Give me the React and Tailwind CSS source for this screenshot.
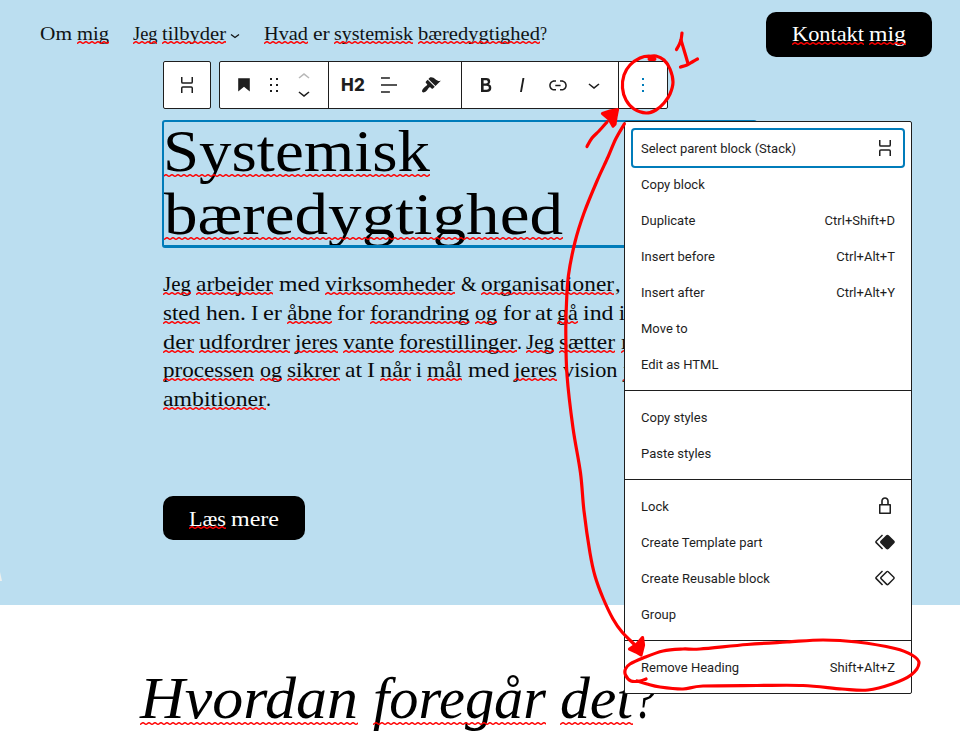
import { useLayoutEffect, useRef, useState } from 'react';

// Each word: [text, left edge, right edge, flagged by the spell checker]
const NAV_1 = [['Om', 40, 72], ['mig', 77, 109, 1]];
const NAV_2 = [['Jeg', 132.5, 157, 1], ['tilbyder', 162, 226, 1]];
const NAV_3 = [['Hvad', 264, 308, 1], ['er', 312.7, 329.5], ['systemisk', 334, 413, 1], ['bæredygtighed', 418, 540, 1], ['?', 540, 547]];
const CONTACT = [['Kontakt', 792, 864, 1], ['mig', 869, 906, 1]];
const READ_MORE = [['Læs', 189, 226, 1], ['mere', 231, 279]];
const TITLE = [[['Systemisk', 163, 430, 1]], [['bæredygtighed', 164, 563, 1]]];
const BODY = [
  [['Jeg', 163, 191, 1], ['arbejder', 196, 273, 1], ['med', 279, 320], ['virksomheder', 325, 455, 1], ['&', 460.5, 476], ['organisationer', 481, 614, 1], [',', 614.5, 620]],
  [['sted', 163, 200, 1], ['hen.', 206, 246], ['I', 251, 258.5], ['er', 263, 282], ['åbne', 287, 332, 1], ['for', 337, 364.5], ['forandring', 370, 469.5, 1], ['og', 475, 497, 1], ['for', 502.5, 530], ['at', 535, 552.5], ['gå', 557, 578, 1], ['ind', 583, 613.5], ['i', 619, 625]],
  [['der', 163, 194, 1], ['udfordrer', 199, 290, 1], ['jeres', 295, 338, 1], ['vante', 343, 394, 1], ['forestillinger', 399, 517, 1], ['.', 517, 522], ['Jeg', 526, 554, 1], ['sætter', 559, 615, 1], ['r', 620.5, 629, 1]],
  [['processen', 163, 254, 1], ['og', 260, 282, 1], ['sikrer', 287, 340, 1], ['at', 345, 362], ['I', 367, 375], ['når', 380, 411, 1], ['i', 416, 422], ['mål', 427, 462, 1], ['med', 467.5, 509], ['jeres', 514, 557, 1], ['vision', 562.5, 617], ['j', 623, 628, 1]],
  [['ambitioner', 163, 266, 1], ['.', 266, 271]],
];
const FOOT = [['Hvordan', 140, 358, 1], ['foregår', 373, 546, 1], ['det', 560, 633, 1], ['?', 633, 656]];

const SERIF = "font-['Liberation_Serif',serif]";

// Sets one word to an exact width by widening its letters.
function Word({ text, width, gap, flagged, waveTop }) {
  const ref = useRef(null);
  const [scale, setScale] = useState(1);
  useLayoutEffect(() => {
    const el = ref.current;
    el.style.transform = 'none';
    const value = width / el.getBoundingClientRect().width;
    el.style.transform = `scaleX(${value})`;
    setScale(value);
  }, [text, width]);
  return (
    <span className="relative block shrink-0" style={{ marginLeft: gap, width }}>
      <span ref={ref} className="inline-block origin-left whitespace-pre" style={{ transform: `scaleX(${scale})` }}>{text}</span>
      {flagged ? (
        <svg className={`absolute left-0 h-[3px] w-full ${waveTop}`}>
          <rect width="100%" height="3" fill="url(#wave)" />
        </svg>
      ) : null}
    </span>
  );
}

function Line({ words, origin, className, waveTop }) {
  return (
    <div className={`flex ${className}`}>
      {words.map(([text, l, r, flagged], i) => (
        <Word key={i} text={text} width={r - l} gap={l - (i ? words[i - 1][2] : origin)} flagged={flagged} waveTop={waveTop} />
      ))}
    </div>
  );
}

function Icon({ d, className = '' }) {
  return (
    <svg viewBox="0 0 24 24" className={`size-6 shrink-0 fill-current ${className}`}>
      <path d={d} fillRule="evenodd" />
    </svg>
  );
}

const ICONS = {
  heading: 'M6.2 5.2v13.4l5.8-4.8 5.8 4.8V5.2z',
  drag: 'M8 7h2V5H8v2zm0 6h2v-2H8v2zm0 6h2v-2H8v2zm6-14v2h2V5h-2zm0 8h2v-2h-2v2zm0 6h2v-2h-2v2z',
  up: 'M6.5 12.4L12 8l5.5 4.4-.9 1.2L12 10l-4.5 3.6-1-1.2z',
  down: 'M17.5 11.6L12 16l-5.5-4.4.9-1.2L12 14l4.5-3.6 1 1.2z',
  align: 'M4 19.8h8.9v-1.5H4v1.5zm8.9-15.6H4v1.5h8.9V4.2zm-8.9 7v1.5h16v-1.5H4z',
  bold: 'M14.7 11.3c1-.6 1.5-1.6 1.5-3 0-2.3-1.3-3.4-4-3.4H7v14h5.8c1.4 0 2.5-.3 3.3-1 .8-.7 1.2-1.7 1.2-2.9.1-1.9-.8-3.1-2.6-3.7zm-5.1-4h2.3c.6 0 1.1.1 1.4.4.3.3.5.7.5 1.2s-.2 1-.5 1.2c-.3.3-.8.4-1.4.4H9.6V7.3zm4.6 9c-.4.3-1 .4-1.7.4H9.6v-3.9h2.9c.7 0 1.3.2 1.7.5.4.3.6.8.6 1.5s-.2 1.2-.6 1.5z',
  italic: 'M12.5 5L10 19h1.9l2.5-14z',
  link: 'M15.6 7.2H14v1.5h1.6c2 0 3.7 1.7 3.7 3.7s-1.7 3.7-3.7 3.7H14v1.5h1.6c2.8 0 5.2-2.3 5.2-5.2 0-2.9-2.3-5.2-5.2-5.2zM4.7 12.4c0-2 1.7-3.7 3.7-3.7H10V7.2H8.4c-2.9 0-5.2 2.3-5.2 5.2 0 2.9 2.3 5.2 5.2 5.2H10v-1.5H8.4c-2 0-3.7-1.7-3.7-3.7zm4.6.9h5.3v-1.5H9.3v1.5z',
  more: 'M13 19h-2v-2h2v2zm0-6h-2v-2h2v2zm0-6h-2V5h2v2z',
  lock: 'M17 10h-1.2V7c0-2.1-1.7-3.8-3.8-3.8-2.1 0-3.8 1.7-3.8 3.8v3H7c-.6 0-1 .4-1 1v8c0 .6.4 1 1 1h10c.6 0 1-.4 1-1v-8c0-.6-.4-1-1-1zm-7.2-3c0-1.2 1-2.2 2.2-2.2s2.2 1 2.2 2.2v3H9.8V7zm6.7 11.5h-9v-7h9v7z',
  filled: 'M21.3 10.8l-5.6-5.6c-.7-.7-1.8-.7-2.5 0l-5.6 5.6c-.7.7-.7 1.8 0 2.5l5.6 5.6c.3.3.8.5 1.2.5s.9-.2 1.2-.5l5.6-5.6c.8-.7.8-1.9.1-2.5zM3.7 11.8L10 5.5l-1-1-6.3 6.3c-.7.7-.7 1.8 0 2.5L9 19.5l1.1-1.1-6.3-6.3c-.2 0-.2-.2-.1-.3z',
  outline: 'M21.3 10.8l-5.6-5.6c-.7-.7-1.8-.7-2.5 0l-5.6 5.6c-.7.7-.7 1.8 0 2.5l5.6 5.6c.3.3.8.5 1.2.5s.9-.2 1.2-.5l5.6-5.6c.8-.7.8-1.9.1-2.5zm-1 1.4l-5.6 5.6c-.1.1-.3.1-.4 0l-5.6-5.6c-.1-.1-.1-.3 0-.4l5.6-5.6s.1-.1.2-.1.1 0 .2.1l5.6 5.6c.1.1.1.3 0 .4zM3.7 11.8L10 5.5l-1-1-6.3 6.3c-.7.7-.7 1.8 0 2.5L9 19.5l1.1-1.1-6.3-6.3c-.2 0-.2-.2-.1-.3z',
};

function StackIcon({ className = '' }) {
  return (
    <svg viewBox="0 0 24 24" className={`size-6 shrink-0 ${className}`} fill="none" stroke="currentColor" strokeWidth="1.5">
      <path d="M6.75 4v5c0 .7.4 1.1 1.1 1.1h8.3c.7 0 1.1-.4 1.1-1.1V4M6.75 20v-5c0-.7.4-1.1 1.1-1.1h8.3c.7 0 1.1.4 1.1 1.1v5" />
    </svg>
  );
}

function Toolbar() {
  return (
    <div className="ml-[163px] flex h-12 gap-2 text-[#1e1e1e]">
      <div className="flex w-12 items-center justify-center rounded-[2px] border border-[#1e1e1e] bg-white">
        <StackIcon />
      </div>
      <div className="flex w-[449px] rounded-[2px] border border-[#1e1e1e] bg-white">
        <div className="flex w-[109px] items-center border-r border-[#1e1e1e] pl-3">
          <Icon d={ICONS.heading} />
          <Icon d={ICONS.drag} className="ml-[6px]" />
          <div className="ml-[6px] flex flex-col">
            <Icon d={ICONS.up} className="-mb-1 text-[#b8b8b8]" />
            <Icon d={ICONS.down} className="-mt-1" />
          </div>
        </div>
        <div className="flex w-[133px] items-center border-r border-[#1e1e1e] pl-3">
          <span className="w-[26px] font-['Inter',sans-serif] text-[17px] leading-6 font-extrabold tracking-[0.3px]">H2</span>
          <Icon d={ICONS.align} className="ml-[10px]" />
          <svg viewBox="0 0 20 20" className="ml-5 size-5 fill-current">
            <path d="M14.48 11.06L7.41 3.99l1.5-1.5c.5-.56 2.3-.47 3.51.32 1.21.8 1.43 1.28 2.91 2.1 1.18.64 2.45 1.26 4.45.85zm-.71.71L6.7 4.7 4.93 6.47c-.39.39-.39 1.02 0 1.41l1.06 1.06c.39.39.39 1.03 0 1.42-.6.6-1.43 1.11-2.21 1.69-.35.26-.7.53-1.01.84C1.43 14.23.4 16.08 1.4 17.07c.99 1 2.84-.03 4.18-1.36.31-.31.58-.66.85-1.02.57-.78 1.08-1.61 1.69-2.21.39-.39 1.02-.39 1.41 0l1.06 1.06c.39.39 1.02.39 1.41 0z" />
          </svg>
        </div>
        <div className="flex w-[157px] items-center gap-3 border-r border-[#1e1e1e] pl-3">
          <Icon d={ICONS.bold} />
          <Icon d={ICONS.italic} />
          <Icon d={ICONS.link} />
          <Icon d={ICONS.down} />
        </div>
        <div className="flex flex-1 items-center justify-center text-[#007cba]">
          <Icon d={ICONS.more} />
        </div>
      </div>
    </div>
  );
}

const ICON_POS = '-mr-0.5';
const MENU = [
  [
    ['Select parent block (Stack)', <StackIcon className={ICON_POS} />],
    ['Copy block'],
    ['Duplicate', 'Ctrl+Shift+D'],
    ['Insert before', 'Ctrl+Alt+T'],
    ['Insert after', 'Ctrl+Alt+Y'],
    ['Move to'],
    ['Edit as HTML'],
  ],
  [['Copy styles'], ['Paste styles']],
  [
    ['Lock', <Icon d={ICONS.lock} className={ICON_POS} />],
    ['Create Template part', <Icon d={ICONS.filled} className={ICON_POS} />],
    ['Create Reusable block', <Icon d={ICONS.outline} className={ICON_POS} />],
    ['Group'],
  ],
  [['Remove Heading', 'Shift+Alt+Z']],
];

function Menu() {
  return (
    <div className="absolute top-[121px] left-[624px] w-[288px] rounded-[2px] border border-[#1e1e1e] bg-white font-['Roboto',sans-serif] text-[13px] leading-4 text-[#1e1e1e]">
      {MENU.map((group, g) => (
        <div key={g} className={g ? 'border-t border-[#1e1e1e] p-2' : 'p-2'}>
          {group.map(([label, right], i) => (
            <div
              key={label}
              className={`flex h-9 items-center justify-between px-2 ${g === 0 && i === 0 ? 'rounded-[2px] shadow-[0_0_0_2px_#007cba]' : ''}`}
            >
              <span className="pt-0.5">{label}</span>
              {right ? (typeof right === 'string' ? <span className="pt-0.5">{right}</span> : right) : null}
            </div>
          ))}
        </div>
      ))}
    </div>
  );
}

// Turns a list of points into one smooth pen stroke.
function smooth(p) {
  let d = `M${p[0][0]} ${p[0][1]}`;
  for (let i = 0; i < p.length - 1; i++) {
    const a = p[i - 1] || p[i];
    const b = p[i];
    const c = p[i + 1];
    const e = p[i + 2] || c;
    d += `C${b[0] + (c[0] - a[0]) / 6} ${b[1] + (c[1] - a[1]) / 6} ${c[0] - (e[0] - b[0]) / 6} ${c[1] - (e[1] - b[1]) / 6} ${c[0]} ${c[1]}`;
  }
  return d;
}

const STROKES = [
  [[654, 58], [649, 56], [640, 58], [630, 65], [624, 75], [622.5, 88], [626, 100], [634, 109], [646, 113], [656, 110], [664, 103], [670, 94], [673, 82], [670, 69], [664, 60], [656, 56], [648, 56.5]],
  [[682, 33], [681, 40], [679, 45], [676.5, 49.5]],
  [[681, 40], [684, 50], [688, 63.5]],
  [[680.5, 67], [687, 65], [693, 61.5], [697.5, 59]],
  [[587, 146.5], [592, 138], [599, 131], [607, 122]],
  [[624.3, 124], [615.7, 139], [608, 157], [597, 181], [584, 213], [575, 242], [568.5, 275], [566.5, 303], [565.8, 331], [567, 375], [573, 428], [580.5, 473], [584, 511], [590, 553], [595, 576], [603, 598], [613, 619], [622, 632], [634, 644]],
  [[646, 679], [640, 681], [631, 681], [625.5, 675], [625.5, 669], [630, 664], [643, 658], [663, 651], [683, 649], [700, 649], [747, 644.5], [787, 642], [823, 640], [857, 642], [895, 648.5], [912, 655], [919, 663], [911, 675], [892, 684], [868, 690], [842, 689], [803, 685.5], [757, 685.5], [703, 686], [683, 689], [660, 687], [647, 684], [637, 681]],
];

function Annotations() {
  return (
    <svg viewBox="0 0 960 736" className="pointer-events-none absolute top-0 left-0 h-[736px] w-[960px]">
      <g fill="none" stroke="#ff0000" strokeWidth="3.2" strokeLinecap="round" strokeLinejoin="round">
        {STROKES.map((pts, i) => (
          <path key={i} d={smooth(pts)} />
        ))}
        <path d="M649.5 59h5" strokeWidth="4" />
        <path d="M602.5 113.5L610 111L617.5 109.5L616 117L615 124L613 126L609 119Z" fill="#ff0000" />
        <path d="M642.5 637.5L637 644L629.5 649L636 652L641 655L643.5 645Z" fill="#ff0000" />
      </g>
    </svg>
  );
}

export default function App() {
  return (
    <div className={`relative h-[736px] w-[960px] overflow-hidden bg-white text-black ${SERIF}`}>
      <svg className="absolute size-0">
        <defs>
          <pattern id="wave" width="6" height="3" patternUnits="userSpaceOnUse">
            <path d="M-3 .7C-1.5 .7 -1.5 2.3 0 2.3C1.5 2.3 1.5 .7 3 .7C4.5 .7 4.5 2.3 6 2.3C7.5 2.3 7.5 .7 9 .7" fill="none" stroke="#ff0000" strokeWidth="1.4" />
          </pattern>
        </defs>
      </svg>

      <section className="h-[605px] bg-[#bbdef0]">
        <header className="flex h-[61px] items-start text-[19px] leading-6 text-[#101314]">
          <Line words={NAV_1} origin={0} className="mt-[22px] w-[132px]" waveTop="top-[19px]" />
          <Line words={NAV_2} origin={132} className="mt-[22px]" waveTop="top-[19px]" />
          <svg viewBox="0 0 10 6" className="mt-[33px] ml-1 h-1.5 w-[10px]" fill="none" stroke="currentColor" strokeWidth="1.3">
            <path d="M1 1.5L5 4.5L9 1.5" />
          </svg>
          <Line words={NAV_3} origin={240} className="mt-[22px] w-[526px]" waveTop="top-[19px]" />
          <div className="mt-3 h-[45px] w-[166px] rounded-[10px] bg-black pt-[10px] text-[21px] text-white">
            <Line words={CONTACT} origin={766} className="" waveTop="top-[20px]" />
          </div>
        </header>

        <Toolbar />

        <div className="mt-[11px] ml-[162px] h-[128px] w-[595px] overflow-hidden rounded-[3px] border-2 border-b-3 border-[#007cba] pt-0.5 text-[60px] leading-[54px]">
          <Line words={TITLE[0]} origin={164} className="h-[54px]" waveTop="top-[50px]" />
          <Line words={TITLE[1]} origin={164} className="mt-[9px] h-[54px]" waveTop="top-[50px]" />
        </div>

        <div className="mt-[22px] ml-[163px] w-[594px] text-[21px] leading-[28.75px] text-[#080a0b]">
          {BODY.map((words, i) => (
            <Line key={i} words={words} origin={163} className="h-[28.75px]" waveTop="top-[22px]" />
          ))}
        </div>

        <div className="mt-[82px] ml-[163px] h-11 w-[142px] rounded-[10px] bg-black pt-[11px] text-[21px] leading-6 text-white">
          <Line words={READ_MORE} origin={163} className="" waveTop="top-[19px]" />
        </div>
        <svg viewBox="0 0 2 9" className="mt-8 h-[9px] w-0.5" fill="#eef0ee">
          <path d="M0 0L2 9H0z" />
        </svg>
      </section>

      <section className="pt-[66px] text-[60px] leading-[54px] italic">
        <Line words={FOOT} origin={0} className="h-[54px]" waveTop="top-[51px]" />
      </section>

      <Menu />
      <Annotations />
    </div>
  );
}
